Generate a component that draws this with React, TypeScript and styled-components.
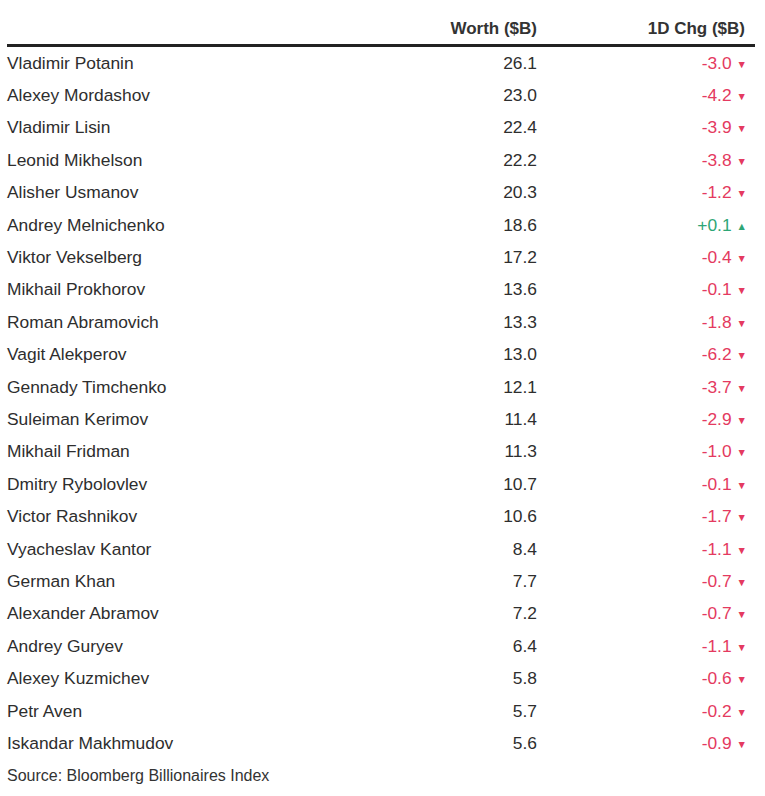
import React from "react"
import styled, { createGlobalStyle } from "styled-components"

type Row = { name: string; worth: string; chg: string }

const rows: Row[] = [
  { name: "Vladimir Potanin", worth: "26.1", chg: "-3.0" },
  { name: "Alexey Mordashov", worth: "23.0", chg: "-4.2" },
  { name: "Vladimir Lisin", worth: "22.4", chg: "-3.9" },
  { name: "Leonid Mikhelson", worth: "22.2", chg: "-3.8" },
  { name: "Alisher Usmanov", worth: "20.3", chg: "-1.2" },
  { name: "Andrey Melnichenko", worth: "18.6", chg: "+0.1" },
  { name: "Viktor Vekselberg", worth: "17.2", chg: "-0.4" },
  { name: "Mikhail Prokhorov", worth: "13.6", chg: "-0.1" },
  { name: "Roman Abramovich", worth: "13.3", chg: "-1.8" },
  { name: "Vagit Alekperov", worth: "13.0", chg: "-6.2" },
  { name: "Gennady Timchenko", worth: "12.1", chg: "-3.7" },
  { name: "Suleiman Kerimov", worth: "11.4", chg: "-2.9" },
  { name: "Mikhail Fridman", worth: "11.3", chg: "-1.0" },
  { name: "Dmitry Rybolovlev", worth: "10.7", chg: "-0.1" },
  { name: "Victor Rashnikov", worth: "10.6", chg: "-1.7" },
  { name: "Vyacheslav Kantor", worth: "8.4", chg: "-1.1" },
  { name: "German Khan", worth: "7.7", chg: "-0.7" },
  { name: "Alexander Abramov", worth: "7.2", chg: "-0.7" },
  { name: "Andrey Guryev", worth: "6.4", chg: "-1.1" },
  { name: "Alexey Kuzmichev", worth: "5.8", chg: "-0.6" },
  { name: "Petr Aven", worth: "5.7", chg: "-0.2" },
  { name: "Iskandar Makhmudov", worth: "5.6", chg: "-0.9" },
]

const GlobalStyle = createGlobalStyle`
  body {
    margin: 0;
    background: #fff;
    font-family: "Liberation Sans", Arial, sans-serif;
    color: #333;
  }
`

export default function App() {
  return (
    <>
      <GlobalStyle />
      <S.Page>
        <S.HeaderRow>
          <span />
          <S.HeadCell>Worth ($B)</S.HeadCell>
          <S.HeadCell>1D Chg ($B)</S.HeadCell>
        </S.HeaderRow>
        {rows.map((r) => {
          const up = r.chg.startsWith("+")
          return (
            <S.Row key={r.name}>
              <S.Name>{r.name}</S.Name>
              <S.Worth>{r.worth}</S.Worth>
              <S.Change up={up}>
                {r.chg}
                <S.Arrow>{up ? "▲" : "▼"}</S.Arrow>
              </S.Change>
            </S.Row>
          )
        })}
        <S.Source>Source: Bloomberg Billionaires Index</S.Source>
      </S.Page>
    </>
  )
}

const S = {
  Page: styled.div`
    width: 748px;
    padding: 14px 0 0 7px;
  `,
  HeaderRow: styled.div`
    display: grid;
    grid-template-columns: 1fr 200px 208px;
    align-items: center;
    height: 30px;
    border-bottom: 3px solid #222;
    padding-right: 10px;
  `,
  HeadCell: styled.div`
    font-size: 17px;
    font-weight: bold;
    color: #333;
    text-align: right;
  `,
  Row: styled.div`
    display: grid;
    grid-template-columns: 1fr 200px 208px;
    align-items: center;
    height: 32.4px;
    font-size: 17.4px;
    padding-right: 10px;
  `,
  Name: styled.div`
    color: #2e2e2e;
  `,
  Worth: styled.div`
    text-align: right;
    color: #2e2e2e;
  `,
  Change: styled.div<{ up: boolean }>`
    text-align: right;
    margin-right: -2px;
    color: ${({ up }) => (up ? "#2ea676" : "#e43a60")};
  `,
  Arrow: styled.span`
    display: inline-block;
    font-size: 10.5px;
    margin-left: 5px;
    vertical-align: 1px;
  `,
  Source: styled.div`
    margin-top: 1px;
    height: 30px;
    line-height: 30px;
    font-size: 16px;
    color: #333;
  `,
}
